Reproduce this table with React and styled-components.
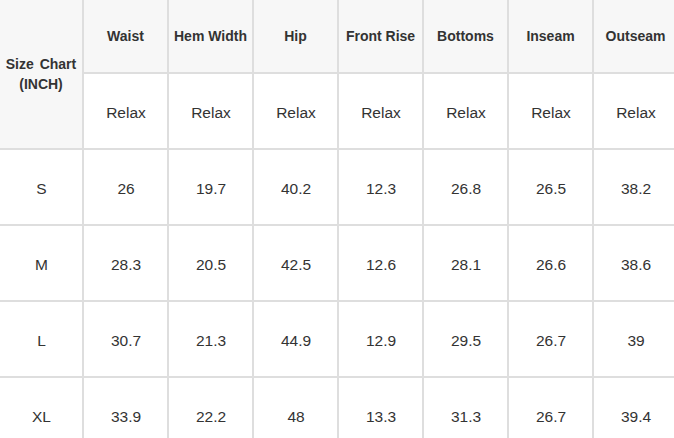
import React from "react";
import styled, { createGlobalStyle } from "styled-components";

const Global = createGlobalStyle`
  html, body { margin: 0; padding: 0; background: #ffffff; overflow: hidden; }
  body { font-family: "Liberation Sans", Arial, sans-serif; color: #333333; }
`;

const Grid = styled.div`
  display: grid;
  grid-template-columns: 82px repeat(7, 83px);
  grid-template-rows: 72px repeat(6, 74px);
  gap: 2px;
  background: #dedede;
  width: max-content;
`;

const Cell = styled.div`
  display: flex;
  align-items: center;
  justify-content: center;
  text-align: center;
  box-sizing: border-box;
  padding-top: ${(p) => (p.$head ? "0" : "3px")};
  padding-left: ${(p) => (p.$head ? "0" : "1px")};
  background: ${(p) => (p.$head ? "#f7f7f7" : "#ffffff")};
  font-size: ${(p) => (p.$head ? "14px" : "15.5px")};
  font-weight: ${(p) => (p.$head ? 700 : 400)};
  line-height: 20px;
  color: #333333;
  white-space: nowrap;
`;

const Corner = styled(Cell)`
  grid-row: 1 / span 2;
  white-space: normal;
  word-spacing: 2px;
`;

const columns = ["Waist", "Hem Width", "Hip", "Front Rise", "Bottoms", "Inseam", "Outseam"];
const rows = [
  ["S", "26", "19.7", "40.2", "12.3", "26.8", "26.5", "38.2"],
  ["M", "28.3", "20.5", "42.5", "12.6", "28.1", "26.6", "38.6"],
  ["L", "30.7", "21.3", "44.9", "12.9", "29.5", "26.7", "39"],
  ["XL", "33.9", "22.2", "48", "13.3", "31.3", "26.7", "39.4"],
];

export default function App() {
  return (
    <>
      <Global />
      <Grid>
        <Corner $head>
          Size Chart
          <br />
          (INCH)
        </Corner>
        {columns.map((c) => (
          <Cell $head key={c}>{c}</Cell>
        ))}
        {columns.map((c) => (
          <Cell key={"r" + c}>Relax</Cell>
        ))}
        {rows.map((r) =>
          r.map((v, i) => <Cell key={r[0] + i}>{v}</Cell>)
        )}
      </Grid>
    </>
  );
}
